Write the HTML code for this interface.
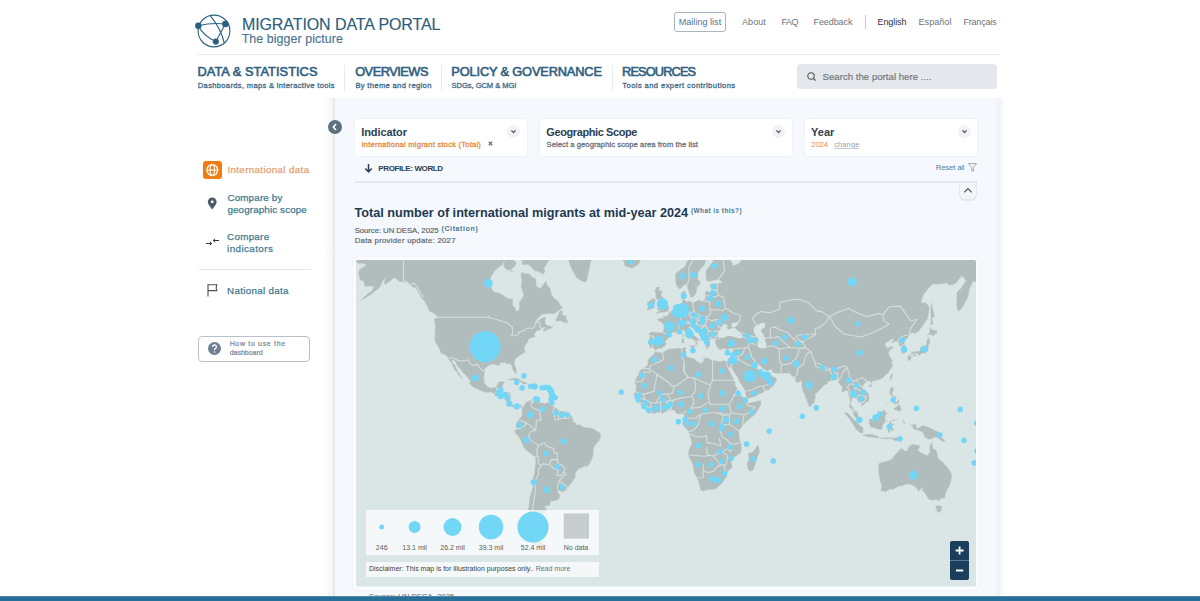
<!DOCTYPE html>
<html><head><meta charset="utf-8">
<style>
*{margin:0;padding:0;box-sizing:border-box}
html,body{width:1200px;height:601px;overflow:hidden;background:#fff;font-family:"Liberation Sans",sans-serif}
.a{position:absolute;white-space:nowrap}
.vd{position:absolute;top:65px;width:1px;height:26px;background:#e9ecef}
.card{position:absolute;background:#fff;border-radius:3px;box-shadow:0 0 2px rgba(40,60,80,0.10)}
.chev{position:absolute;width:13px;height:13px;border-radius:50%;background:#f0f2f5}
.lg{top:544px;text-align:center;font-size:7px;line-height:8px;color:#555d63}
</style></head><body>
<!-- logo -->
<svg class="a" style="left:190px;top:8px" width="45" height="45" viewBox="190 8 45 45">
 <g fill="none" stroke="#2a5f80" stroke-width="1.1">
  <circle cx="214" cy="31" r="15.9"/>
  <path d="M198.3 25.7 Q212 22.3 225.4 24"/>
  <path d="M210.5 15.9 Q221 29 224.3 43"/>
  <path d="M225.4 24 L215.8 41.6"/>
  <path d="M198.3 25.7 Q203.5 36 215.8 41.6"/>
 </g>
 <g fill="#2a5f80"><circle cx="198.3" cy="25.7" r="3.2"/><circle cx="225.4" cy="24" r="3.3"/><circle cx="215.8" cy="41.6" r="3.1"/></g>
</svg>

<!-- top nav -->
<div class="a" style="left:674px;top:11.5px;width:52px;height:20px;border:1px solid #a9b6bf;border-radius:3px"></div>
<div class="a" style="left:865px;top:15px;width:1px;height:14px;background:#c5c9cc"></div>
<div class="a" style="left:197px;top:54px;width:803px;height:1px;background:#eaedf0"></div>
<div class="vd" style="left:344px"></div>
<div class="vd" style="left:441px"></div>
<div class="vd" style="left:612px"></div>
<div class="a" style="left:797px;top:64px;width:200px;height:25px;background:#e4e7eb;border-radius:4px"></div>
<svg class="a" style="left:806px;top:71px" width="11" height="11"><circle cx="5" cy="5" r="3.2" fill="none" stroke="#555" stroke-width="1.1"/><path d="M7.3 7.3 L9.5 9.5" stroke="#555" stroke-width="1.2"/></svg>

<!-- panel -->
<div class="a" style="left:324px;top:98px;width:12px;height:510px;background:linear-gradient(to right,rgba(255,255,255,0),rgba(225,230,236,0.6))"></div>
<div class="a" style="left:333px;top:98px;width:664px;height:510px;background:#f5f9fd;border-left:2px solid #e6eaef"></div>
<div class="a" style="left:997px;top:98px;width:8px;height:510px;background:linear-gradient(to right,rgba(225,230,236,0.6),rgba(255,255,255,0))"></div>

<!-- collapse button -->
<div class="a" style="left:328px;top:120px;width:14px;height:14px;border-radius:50%;background:#5d7181"></div>
<svg class="a" style="left:328px;top:120px" width="14" height="14"><path d="M8 4 L5.3 7 L8 10" fill="none" stroke="#fff" stroke-width="1.6"/></svg>

<!-- cards -->
<div class="card" style="left:355px;top:118.5px;width:172px;height:37px"></div>
<div class="card" style="left:540px;top:119px;width:252px;height:37px"></div>
<div class="card" style="left:804.5px;top:119px;width:172.5px;height:37px"></div>
<div class="chev" style="left:507px;top:124.5px"></div>
<div class="chev" style="left:772px;top:124.5px"></div>
<div class="chev" style="left:957.5px;top:124.5px"></div>
<svg class="a" style="left:507px;top:124.5px" width="13" height="13"><path d="M4.4 5.4 L6.5 7.6 L8.6 5.4" fill="none" stroke="#50565c" stroke-width="1.3"/></svg>
<svg class="a" style="left:772px;top:124.5px" width="13" height="13"><path d="M4.4 5.4 L6.5 7.6 L8.6 5.4" fill="none" stroke="#50565c" stroke-width="1.3"/></svg>
<svg class="a" style="left:957.5px;top:124.5px" width="13" height="13"><path d="M4.4 5.4 L6.5 7.6 L8.6 5.4" fill="none" stroke="#50565c" stroke-width="1.3"/></svg>
<svg class="a" style="left:487px;top:140px" width="8" height="8"><path d="M1.8 1.8 L5.2 5.2 M5.2 1.8 L1.8 5.2" stroke="#707478" stroke-width="1.3"/></svg>

<!-- profile row -->
<svg class="a" style="left:364px;top:163px" width="10" height="11"><path d="M4.5 1 V8.5 M1.3 5.5 L4.5 8.8 L7.7 5.5" fill="none" stroke="#2c4052" stroke-width="1.5"/></svg>
<svg class="a" style="left:967px;top:162px" width="11" height="11"><path d="M1.5 1.5 H9.5 L6.3 5.5 V9.5 L4.7 8.5 V5.5 Z" fill="none" stroke="#98a1a7" stroke-width="0.9"/></svg>
<div class="a" style="left:959px;top:181px;width:17.5px;height:18.5px;border-radius:0 0 6px 6px;background:#f3f6f9;border:1px solid #e4e8ec;border-top:none;box-shadow:0 1px 1px rgba(0,0,0,0.06)"></div>
<div class="a" style="left:355px;top:181px;width:622px;height:1.5px;background:#e5e9ed"></div>
<svg class="a" style="left:959px;top:181px" width="18" height="18"><path d="M5.3 11.3 L9 7.6 L12.7 11.3" fill="none" stroke="#4a4f55" stroke-width="1.1"/></svg>

<!-- sidebar -->
<div class="a" style="left:203.4px;top:160.6px;width:18.5px;height:18.2px;background:#f07c14;border-radius:3px"></div>
<svg class="a" style="left:203.4px;top:160.6px" width="19" height="19"><g fill="none" stroke="#fff" stroke-width="1.1"><circle cx="9.3" cy="9.1" r="5.4" stroke-width="1.3"/><ellipse cx="9.3" cy="9.1" rx="2.2" ry="5.3"/><path d="M4 9.1H14.6"/></g></svg>
<svg class="a" style="left:207px;top:197px" width="11" height="13"><path d="M5.2 12.5 C2 8.5 0.8 6.8 0.8 4.8 A4.4 4.4 0 0 1 9.6 4.8 C9.6 6.8 8.4 8.5 5.2 12.5Z" fill="#4c5b6a"/><circle cx="5.2" cy="4.8" r="1.4" fill="#fff"/></svg>
<svg class="a" style="left:205px;top:237px" width="15" height="10"><g fill="none" stroke="#333" stroke-width="1"><path d="M1 6.5 H6.5 M4.8 4.8 L6.8 6.5 L4.8 8.2"/><path d="M14 3.5 H8.5 M10.2 1.8 L8.2 3.5 L10.2 5.2"/></g></svg>
<div class="a" style="left:199px;top:269px;width:112px;height:1px;background:#e3e6e9"></div>
<svg class="a" style="left:206px;top:283px" width="13" height="14"><path d="M2 13.5 V1.8 H10.8 Q9.6 4.6 10.8 7.6 H2" fill="none" stroke="#4a4f55" stroke-width="1.1"/></svg>
<div class="a" style="left:198px;top:335.6px;width:112px;height:26px;border:1px solid #b9c1c8;border-radius:4px"></div>
<div class="a" style="left:207.5px;top:342px;width:13px;height:13px;border-radius:50%;background:#6f7f92"></div>
<svg class="a" style="left:207.5px;top:342px" width="13" height="13"><path d="M4.6 5 A1.9 1.9 0 1 1 7.3 6.6 C6.6 7 6.5 7.4 6.5 8" fill="none" stroke="#fff" stroke-width="1.3"/><circle cx="6.5" cy="10" r="0.8" fill="#fff"/></svg>

<!-- map -->
<div class="a" style="left:353px;top:257px;width:626px;height:332.5px;border-radius:5px;background:#f9fbfd;box-shadow:0 0 1px rgba(180,190,200,0.5)"></div>
<svg class="a" style="left:356px;top:260px" width="620" height="327" viewBox="356 260 620 327">
 <defs><clipPath id="mc"><rect x="356" y="260" width="620" height="326.5" rx="2"/></clipPath></defs>
 <g clip-path="url(#mc)">
  <rect x="356" y="260" width="620" height="327" fill="#dae5e5"/>
  <g fill="#b1bdbc" stroke="#d5dfdf" stroke-width="0.5" stroke-linejoin="round"><path d="M353.2 258.9 L353.2 247.6 L364.4 237.2 L375.5 229.8 L403.5 239.3 L427.7 237.2 L451.9 247.6 L489.1 247.6 L498.4 242.5 L505.9 250.0 L509.6 254.8 L502.1 265.1 L497.1 268.8 L494.7 270.9 L491.0 277.6 L490.6 286.2 L493.8 291.8 L498.4 292.5 L502.1 294.2 L507.7 298.2 L512.8 298.8 L512.9 305.5 L515.2 307.6 L515.9 310.7 L518.9 310.1 L519.3 305.5 L518.9 302.4 L522.6 297.5 L523.4 294.2 L521.7 289.0 L520.8 287.3 L521.7 281.8 L520.8 276.1 L521.0 272.5 L526.4 273.3 L530.1 274.1 L531.9 276.9 L535.7 278.0 L536.6 285.5 L536.6 286.2 L540.3 288.3 L544.0 283.6 L545.9 280.7 L547.8 285.5 L550.6 289.0 L551.5 294.2 L554.3 298.2 L558.0 300.8 L559.9 303.9 L562.3 307.6 L559.9 310.1 L554.3 313.9 L546.8 313.9 L542.2 314.5 L537.5 318.8 L534.7 322.9 L539.4 319.3 L545.0 316.8 L546.3 317.9 L545.0 320.2 L545.5 323.5 L546.8 325.1 L550.6 326.1 L552.4 326.9 L554.3 325.6 L552.4 328.0 L546.8 330.1 L543.5 331.9 L543.1 329.1 L545.9 327.5 L541.2 328.3 L541.2 329.6 L537.5 330.9 L535.7 331.9 L534.4 334.7 L535.7 336.7 L532.9 337.5 L531.0 338.2 L528.2 339.4 L528.2 342.1 L526.4 343.8 L525.4 345.2 L524.5 348.0 L525.4 352.2 L522.6 353.8 L519.8 355.4 L518.0 357.1 L515.2 359.4 L514.4 363.1 L516.1 368.0 L516.9 372.5 L515.2 374.0 L513.7 371.1 L512.0 368.4 L511.5 365.8 L509.6 363.7 L507.7 364.3 L504.9 362.8 L502.1 362.8 L499.9 363.3 L499.9 365.8 L496.6 365.2 L492.8 364.3 L489.7 365.0 L487.2 366.7 L484.8 369.0 L485.0 372.3 L484.1 376.2 L484.1 379.3 L485.0 383.3 L487.2 386.1 L490.0 387.8 L494.7 387.0 L495.6 387.2 L497.1 385.3 L497.9 382.3 L500.3 381.5 L504.0 381.3 L504.4 381.9 L503.1 385.3 L502.5 387.6 L501.8 389.2 L501.6 392.1 L502.1 392.5 L505.9 392.3 L509.6 392.3 L511.1 394.0 L510.5 397.9 L510.5 399.8 L510.0 401.7 L511.5 403.6 L513.3 405.5 L515.2 405.8 L517.4 404.7 L520.8 405.1 L521.9 406.0 L521.7 408.3 L520.4 408.1 L519.8 406.6 L518.0 405.8 L516.3 407.0 L516.1 408.7 L514.2 407.7 L512.4 407.0 L510.2 406.2 L506.4 403.6 L506.2 401.3 L503.1 398.1 L500.3 397.3 L497.5 396.4 L495.6 396.0 L492.8 393.5 L491.0 392.1 L488.2 392.7 L485.4 392.5 L480.0 390.6 L477.0 389.0 L473.3 387.6 L471.4 385.7 L469.2 383.5 L469.9 380.9 L467.9 377.9 L464.9 374.6 L463.0 373.0 L461.6 370.7 L459.5 368.2 L457.1 365.8 L456.0 363.3 L454.7 360.9 L452.4 360.2 L452.6 362.6 L453.7 363.7 L455.6 365.8 L456.5 368.0 L457.5 370.5 L459.3 373.2 L460.1 375.2 L460.6 375.8 L462.3 377.9 L461.4 378.5 L460.1 377.1 L457.5 374.6 L457.1 372.1 L454.7 370.5 L453.5 368.6 L451.9 364.1 L449.1 360.4 L448.0 358.3 L446.3 355.8 L445.4 354.9 L441.4 353.8 L439.8 350.4 L437.9 346.2 L435.7 343.3 L434.4 339.9 L434.9 333.4 L435.1 325.1 L433.8 319.0 L437.0 317.6 L437.0 315.9 L433.2 313.0 L428.6 311.0 L427.7 307.0 L423.9 300.8 L421.1 297.5 L418.4 292.5 L415.6 288.0 L412.8 287.3 L410.9 285.5 L406.3 282.5 L399.7 281.8 L394.1 278.0 L390.4 281.1 L386.7 283.6 L383.9 284.7 L384.8 279.2 L386.7 277.2 L383.0 280.7 L381.1 285.5 L378.3 289.0 L375.5 290.8 L371.8 294.2 L368.1 296.5 L364.4 298.8 L359.7 300.8 L364.4 296.5 L369.9 291.8 L371.8 290.8 L373.7 286.5 L369.9 286.2 L364.4 286.9 L363.8 281.8 L359.7 279.9 L358.2 272.1 L359.7 269.3 L366.2 265.1 L362.5 263.3 L358.8 263.8 L356.0 262.0 L353.2 258.9Z"/><path d="M550.9 254.3 L548.7 260.7 L546.3 265.1 L544.4 268.0 L545.3 271.7 L543.1 274.5 L538.5 271.7 L534.7 270.9 L532.9 269.3 L528.2 264.6 L523.6 265.1 L521.7 264.2 L522.6 259.4 L530.1 254.8 L531.9 247.6 L517.0 225.7 L554.3 225.7Z"/><path d="M504.2 267.6 L506.8 270.1 L510.5 270.5 L514.8 266.3 L516.7 263.3 L513.3 259.4 L507.7 257.1 L504.4 260.7 L503.4 264.6Z"/><path d="M511.1 272.5 L513.7 271.3 L512.4 270.5 L510.2 270.5Z"/><path d="M585.6 282.5 L587.2 279.9 L587.8 276.1 L589.3 270.1 L591.0 261.6 L593.4 254.8 L604.6 237.2 L563.6 237.2 L566.4 254.8 L568.2 259.4 L570.1 265.9 L572.0 270.1 L574.8 274.9 L576.6 278.0 L581.3 281.1Z"/><path d="M621.3 259.4 L624.1 262.0 L624.3 265.9 L628.8 267.6 L632.5 268.4 L638.1 265.1 L640.7 261.1 L638.4 255.7 L632.5 256.2 L625.0 254.8 L622.2 256.6Z"/><path d="M567.3 324.0 L568.1 321.3 L566.4 318.8 L566.4 315.9 L562.7 314.8 L562.3 309.8 L560.2 310.7 L558.9 312.4 L557.1 316.8 L556.1 318.8 L555.6 321.3 L561.7 321.3 L563.6 323.2 L565.5 322.1Z"/><path d="M507.7 380.5 L509.6 378.9 L513.3 377.9 L517.0 378.1 L521.7 380.7 L525.4 382.3 L527.8 383.9 L521.7 384.5 L522.3 382.9 L519.8 381.3 L517.0 380.7 L513.3 380.1 L509.6 380.5Z"/><path d="M527.5 387.4 L530.1 384.7 L535.7 384.9 L538.6 387.0 L533.8 388.2 L531.0 387.8 L527.5 388.0Z"/><path d="M520.2 387.6 L524.1 388.0 L523.0 388.6 L520.8 388.2Z"/><path d="M540.9 387.4 L543.9 387.6 L543.1 388.2 L540.9 388.2Z"/><path d="M521.9 406.0 L523.6 406.4 L525.4 402.8 L528.2 401.1 L531.0 400.2 L532.9 399.0 L533.6 400.7 L532.7 401.9 L532.7 403.6 L533.8 401.7 L535.3 400.6 L535.7 399.4 L537.5 400.7 L539.4 402.6 L541.2 402.4 L545.0 403.4 L546.8 402.3 L550.7 402.3 L549.6 403.2 L552.4 404.5 L552.8 406.4 L555.2 407.4 L558.0 409.6 L559.9 411.1 L563.6 411.3 L566.4 411.9 L569.2 413.2 L571.0 414.8 L572.9 418.9 L572.9 421.4 L574.8 422.3 L576.6 424.2 L575.7 424.7 L579.4 424.2 L583.1 426.8 L587.8 427.5 L589.7 427.7 L593.4 428.6 L594.3 429.2 L597.1 431.1 L600.5 433.1 L601.0 437.2 L599.9 440.1 L597.1 442.9 L594.3 446.7 L593.4 450.6 L593.4 455.4 L592.1 458.3 L590.6 462.3 L587.8 466.3 L585.6 466.3 L582.2 467.5 L579.8 468.4 L576.6 471.4 L575.7 473.5 L575.5 477.3 L572.5 482.0 L570.1 484.2 L568.2 487.5 L566.4 489.7 L563.8 491.7 L561.4 491.7 L558.4 490.6 L557.3 491.0 L559.3 494.2 L560.4 495.9 L558.7 499.4 L554.3 501.0 L550.6 501.3 L550.0 505.6 L545.9 505.9 L545.0 506.6 L546.8 509.4 L545.9 511.2 L544.6 515.0 L541.6 516.3 L540.3 519.0 L542.2 522.2 L543.5 523.9 L540.3 528.7 L538.5 530.7 L537.5 534.5 L538.6 537.3 L542.2 543.8 L544.6 544.5 L540.7 548.4 L535.7 546.1 L531.9 542.2 L527.3 536.0 L525.8 530.1 L525.4 524.4 L527.3 520.3 L528.2 513.7 L530.1 511.2 L527.7 509.9 L528.6 506.1 L529.1 503.7 L529.3 498.9 L529.7 496.6 L531.0 493.1 L531.9 489.7 L532.7 487.5 L532.9 480.9 L533.2 476.6 L534.5 472.5 L534.7 467.7 L535.5 462.3 L535.1 457.4 L532.9 455.4 L531.9 454.4 L528.2 452.1 L525.4 449.6 L523.9 447.7 L522.4 444.8 L520.8 441.0 L518.9 437.2 L517.0 435.0 L514.8 432.6 L514.6 431.1 L516.3 428.8 L517.0 427.9 L515.4 426.4 L516.1 424.2 L517.0 421.4 L518.0 420.4 L519.3 418.9 L521.7 415.8 L521.7 414.8 L521.9 410.2 L521.0 408.3 L521.9 406.0Z"/><path d="M655.6 350.4 L654.3 349.2 L652.2 347.6 L649.4 348.0 L649.6 345.0 L648.3 344.0 L649.6 339.7 L649.4 336.0 L648.7 333.4 L651.1 331.7 L654.8 331.9 L658.9 332.4 L662.6 332.4 L663.8 328.3 L663.8 325.1 L661.9 322.6 L658.2 320.7 L657.1 319.3 L660.4 317.9 L663.0 318.2 L663.0 315.3 L666.0 316.2 L668.8 313.9 L669.5 311.5 L672.1 310.4 L674.4 307.0 L675.3 304.6 L679.0 303.9 L682.0 302.7 L682.0 299.5 L681.5 297.5 L681.3 292.5 L685.6 290.1 L685.6 294.2 L684.6 299.2 L686.5 301.7 L689.3 300.8 L693.0 302.7 L696.7 300.8 L699.5 299.8 L700.8 301.1 L702.3 300.8 L705.5 298.5 L705.3 296.9 L705.1 292.5 L707.0 290.4 L709.2 292.5 L711.2 291.8 L711.1 288.0 L709.8 286.2 L709.8 284.7 L712.0 283.6 L718.1 283.6 L722.2 282.2 L719.1 279.9 L716.3 279.9 L712.5 281.1 L707.9 281.8 L706.0 279.9 L706.0 276.1 L705.5 272.1 L706.0 270.1 L708.8 266.8 L712.5 261.6 L713.3 261.6 L710.7 258.0 L707.5 258.0 L706.0 260.3 L704.2 265.9 L701.4 268.0 L698.6 272.1 L698.0 276.9 L698.0 279.2 L700.4 281.8 L700.4 284.4 L697.7 286.5 L696.7 290.8 L695.8 294.2 L692.6 297.5 L690.2 297.5 L689.8 294.9 L689.3 294.2 L688.0 290.1 L686.9 285.5 L685.7 283.6 L685.0 285.5 L683.7 285.5 L680.9 288.7 L679.0 289.0 L676.4 285.8 L675.9 283.6 L675.3 280.3 L675.3 274.1 L677.2 272.1 L680.9 269.3 L684.6 266.8 L686.5 262.5 L689.3 258.0 L690.2 257.1 L692.1 250.0 L693.9 245.0 L703.2 237.2 L714.4 231.6 L723.7 237.2 L740.5 252.4 L747.9 245.0 L764.7 245.0 L777.7 242.5 L796.3 219.5 L815.0 219.5 L861.5 190.6 L889.4 219.5 L926.7 225.7 L963.9 239.8 L982.5 237.2 L1010.5 245.0 L1010.5 261.6 L999.3 261.6 L995.6 272.1 L990.0 274.9 L982.5 281.8 L973.2 281.8 L969.5 289.0 L968.6 295.9 L963.9 305.5 L961.1 309.2 L957.8 311.8 L956.5 305.5 L956.5 292.5 L960.2 289.0 L965.8 280.7 L962.1 276.1 L954.6 284.4 L949.0 285.5 L946.8 283.3 L939.7 284.4 L932.3 284.4 L928.0 289.0 L923.0 295.9 L921.1 302.4 L925.7 302.4 L928.5 305.5 L929.5 308.6 L928.5 314.5 L927.6 318.8 L923.0 325.6 L919.2 330.9 L915.5 333.4 L911.8 332.9 L909.4 334.7 L907.5 338.5 L904.3 340.9 L903.4 342.1 L905.3 344.3 L906.9 350.4 L906.2 352.4 L903.4 353.6 L901.5 354.0 L901.2 349.2 L901.5 346.4 L899.1 346.2 L899.1 344.3 L898.4 341.9 L895.0 341.6 L892.2 343.8 L891.7 342.1 L893.5 339.7 L892.2 339.0 L889.4 340.9 L885.7 343.3 L885.2 345.7 L887.6 348.0 L890.7 346.2 L894.1 347.3 L890.4 350.1 L889.4 351.5 L888.5 353.8 L890.0 356.5 L890.9 358.3 L893.0 361.5 L891.3 363.1 L893.2 364.8 L892.2 367.3 L889.4 371.1 L888.5 373.2 L885.7 375.2 L882.0 378.7 L878.3 379.9 L875.5 380.7 L872.7 381.3 L871.2 383.7 L870.3 381.3 L868.0 381.1 L865.2 382.7 L863.4 385.3 L862.8 387.2 L864.3 389.6 L865.2 391.1 L867.5 392.1 L868.8 394.0 L869.3 397.9 L869.0 400.7 L867.1 402.1 L865.2 402.8 L864.3 404.5 L861.9 406.2 L861.1 405.1 L861.5 403.2 L860.2 402.6 L858.7 402.4 L856.9 399.4 L855.9 398.8 L853.9 397.1 L853.1 396.9 L852.2 398.8 L850.9 402.6 L850.7 405.1 L852.8 406.8 L853.1 409.2 L854.4 409.6 L856.5 411.1 L858.5 414.8 L858.5 417.1 L860.0 419.7 L858.7 419.9 L855.9 418.0 L854.6 417.1 L853.1 413.9 L852.8 412.0 L852.4 410.2 L850.3 407.7 L849.0 406.8 L849.6 403.6 L849.4 399.8 L848.1 395.0 L848.1 391.1 L845.1 390.6 L842.9 392.5 L841.6 391.7 L842.0 386.3 L840.1 385.3 L838.2 382.3 L836.9 379.7 L834.5 380.3 L831.7 380.7 L829.9 381.1 L827.6 382.3 L827.1 384.3 L824.3 385.3 L822.4 387.6 L819.2 390.8 L816.8 393.1 L815.3 394.0 L815.5 397.9 L814.6 400.7 L814.6 403.0 L813.7 403.0 L811.6 405.7 L810.3 407.2 L808.4 405.7 L808.1 404.5 L806.8 400.7 L805.6 398.3 L804.7 395.0 L803.4 393.1 L802.5 390.2 L801.6 386.3 L801.7 383.3 L801.4 382.3 L801.0 380.3 L800.1 381.7 L797.8 382.9 L796.0 381.7 L794.5 379.5 L796.3 378.5 L793.5 377.3 L791.7 376.4 L790.8 374.6 L789.8 373.4 L785.2 373.6 L780.9 373.8 L775.9 373.4 L774.0 373.0 L772.7 372.3 L771.8 370.1 L770.8 369.6 L768.4 370.7 L766.5 370.9 L764.7 370.1 L761.9 368.2 L760.6 366.0 L759.7 365.4 L758.2 363.9 L756.3 363.7 L755.4 364.8 L756.1 366.9 L757.8 369.2 L759.5 371.1 L760.0 373.2 L760.6 374.8 L761.5 375.2 L762.1 373.2 L761.9 371.9 L761.3 375.6 L762.8 376.2 L765.6 376.0 L767.5 375.6 L769.3 373.6 L770.5 372.1 L771.0 371.5 L770.8 374.6 L771.8 375.6 L773.1 376.7 L775.1 377.1 L776.4 378.7 L777.3 379.3 L775.5 382.3 L774.9 383.5 L773.6 385.3 L773.4 386.5 L771.4 387.2 L770.3 388.4 L768.4 390.2 L765.6 390.8 L762.8 392.9 L759.1 394.0 L756.3 396.0 L753.5 396.9 L749.8 398.3 L747.0 398.5 L746.4 397.1 L745.3 394.0 L745.1 391.1 L744.2 389.2 L742.3 386.3 L740.5 383.3 L739.0 381.3 L737.7 377.3 L735.8 375.2 L734.0 372.1 L732.7 370.1 L731.5 368.0 L731.0 364.8 L730.4 367.3 L729.9 368.4 L728.6 367.3 L726.7 363.9 L726.5 363.7 L726.1 361.1 L729.9 360.7 L730.8 359.1 L731.2 357.1 L732.1 354.9 L732.7 351.5 L733.0 348.7 L732.1 349.0 L730.2 348.5 L727.4 349.9 L725.6 349.2 L723.2 348.5 L720.9 349.9 L718.1 348.7 L716.8 346.9 L715.9 344.5 L715.3 342.1 L714.8 340.9 L715.3 339.7 L717.2 338.7 L720.0 338.5 L714.8 339.0 L713.5 339.0 L710.7 339.0 L708.8 339.7 L710.3 340.9 L708.5 342.1 L708.8 343.8 L710.7 345.0 L709.8 345.7 L708.5 346.9 L707.9 349.4 L706.4 348.5 L706.0 346.6 L705.7 345.0 L704.7 343.3 L703.6 342.1 L702.1 339.7 L702.3 336.5 L700.4 335.0 L698.6 333.4 L695.8 332.2 L693.9 329.6 L693.0 327.7 L691.5 326.7 L688.9 327.2 L689.1 330.4 L691.1 331.9 L692.4 334.7 L695.8 336.2 L696.2 336.2 L698.0 338.7 L699.5 339.4 L700.3 341.4 L698.0 340.2 L696.7 341.9 L697.8 343.3 L696.7 344.8 L695.8 345.7 L695.0 345.7 L695.8 342.6 L695.0 340.9 L693.7 340.2 L692.4 339.0 L690.2 337.7 L688.7 336.5 L686.5 334.7 L685.6 333.4 L685.2 332.2 L683.7 330.4 L682.6 329.8 L680.0 331.4 L679.6 331.7 L677.2 333.2 L676.1 332.7 L673.4 332.2 L671.6 332.9 L672.0 336.2 L670.1 337.5 L667.7 338.5 L666.0 340.9 L665.4 342.1 L666.4 344.0 L664.7 346.6 L663.0 347.3 L661.5 348.5 L657.8 348.7 L655.6 350.4Z"/><path d="M655.0 350.8 L656.7 352.0 L662.3 352.4 L664.9 351.1 L667.9 349.2 L671.6 348.5 L678.1 348.0 L681.8 348.3 L684.2 347.3 L686.7 347.8 L685.6 349.4 L685.7 350.8 L686.5 352.0 L685.9 353.3 L684.8 355.1 L687.4 356.9 L690.6 357.4 L694.5 358.7 L696.7 360.9 L700.4 363.1 L703.1 361.8 L703.2 359.1 L706.0 357.4 L709.8 358.7 L710.7 359.4 L712.9 360.2 L716.3 360.7 L719.1 361.5 L721.7 361.1 L723.7 360.2 L726.1 360.9 L726.5 363.7 L726.7 363.9 L727.4 366.9 L728.9 369.6 L730.2 372.1 L732.1 376.2 L734.5 380.3 L735.3 382.3 L735.3 385.1 L737.7 388.2 L738.6 391.1 L739.5 392.9 L741.4 394.4 L743.3 396.2 L745.5 397.9 L746.6 400.6 L747.9 402.6 L749.8 402.8 L752.6 402.1 L755.4 401.3 L759.1 400.7 L761.5 400.2 L761.1 402.6 L761.5 402.8 L760.6 405.5 L759.1 408.3 L757.2 411.1 L755.4 413.9 L752.6 416.7 L750.3 418.6 L747.9 420.4 L745.1 423.0 L743.3 425.1 L742.2 426.6 L739.9 429.8 L739.0 431.6 L739.2 435.0 L739.5 438.2 L740.5 441.0 L741.4 442.0 L741.6 445.8 L741.6 449.6 L740.9 452.5 L739.5 454.0 L735.8 456.4 L732.7 458.1 L731.0 459.9 L731.5 462.3 L732.1 464.7 L732.1 468.4 L729.3 470.0 L727.3 472.3 L727.1 474.5 L726.5 477.7 L724.7 479.4 L723.7 480.7 L721.9 483.5 L718.1 487.0 L716.3 488.6 L713.9 489.7 L710.7 489.7 L707.0 490.1 L703.2 491.5 L701.0 490.4 L700.3 490.1 L699.9 487.5 L699.1 484.2 L698.2 480.9 L696.7 477.9 L694.9 474.5 L693.9 472.5 L693.0 466.3 L692.1 463.3 L690.2 459.3 L688.3 456.4 L688.0 453.5 L688.9 449.6 L691.1 444.8 L691.7 442.5 L690.6 438.8 L689.5 435.4 L688.7 433.5 L688.0 430.7 L686.5 429.4 L684.6 427.5 L682.8 424.2 L682.2 423.6 L683.3 421.4 L684.2 417.6 L684.1 415.8 L683.7 414.8 L682.6 413.9 L680.9 414.1 L679.0 414.1 L677.2 414.3 L675.3 412.0 L674.4 410.5 L672.3 410.4 L669.7 410.5 L667.9 411.1 L665.6 412.0 L664.1 412.8 L662.3 413.4 L660.4 412.8 L658.6 412.4 L655.8 413.0 L652.0 414.1 L649.2 413.0 L646.4 410.2 L644.6 409.2 L642.7 407.7 L641.4 406.4 L640.9 404.5 L639.0 403.2 L638.1 402.1 L636.2 400.7 L634.9 399.4 L634.7 396.9 L633.4 394.6 L634.7 393.1 L635.3 391.1 L635.8 388.2 L636.2 385.3 L635.3 384.3 L634.3 382.3 L635.6 379.3 L636.6 376.7 L638.3 374.8 L639.0 371.9 L641.2 369.0 L643.7 368.0 L645.5 366.9 L647.2 365.2 L647.8 362.8 L647.8 360.4 L648.9 358.3 L650.2 356.5 L651.8 355.8 L653.3 354.9 L654.3 352.7 L655.0 350.8Z"/><path d="M757.8 444.8 L759.1 447.7 L759.8 451.1 L759.5 452.5 L758.2 455.4 L757.6 457.4 L756.3 461.3 L755.2 465.3 L753.7 470.2 L750.2 471.4 L747.9 469.4 L747.4 467.3 L746.6 464.3 L747.6 462.3 L748.7 459.3 L747.9 455.4 L748.7 452.9 L752.2 451.9 L753.5 450.6 L755.4 448.2 L756.9 445.8Z"/><path d="M814.6 407.4 L815.3 404.0 L816.8 405.8 L818.5 408.3 L817.2 410.7 L815.0 411.1Z"/><path d="M655.4 314.5 L660.4 312.7 L664.1 312.4 L668.4 311.3 L669.2 306.4 L666.6 303.9 L665.8 300.8 L663.0 297.2 L661.3 295.2 L662.1 292.2 L662.6 290.4 L658.6 290.4 L660.4 286.9 L656.7 286.9 L654.5 290.8 L655.6 294.2 L655.6 297.9 L656.9 299.8 L659.7 299.5 L659.7 302.4 L660.4 304.6 L657.4 304.6 L658.2 307.6 L656.1 309.2 L660.0 310.4 L658.2 311.0 L655.4 314.5Z"/><path d="M654.8 308.0 L654.6 304.3 L655.8 300.8 L654.5 298.5 L652.2 298.2 L650.2 300.5 L647.4 301.7 L647.0 304.3 L648.3 307.0 L646.4 309.2 L648.3 310.1 L651.1 309.2 L654.3 308.0Z"/><path d="M689.1 345.5 L695.0 345.0 L694.1 348.7 L689.3 346.6Z"/><path d="M681.6 343.3 L684.2 343.1 L684.2 338.5 L681.3 338.5Z"/><path d="M682.0 337.5 L683.7 337.2 L683.7 333.7 L682.0 335.0Z"/><path d="M709.8 352.0 L715.0 352.2 L710.7 352.7Z"/><path d="M726.1 353.3 L730.4 351.1 L727.4 352.0Z"/><path d="M909.7 354.9 L912.7 351.7 L916.4 351.3 L919.2 351.1 L920.7 347.3 L923.9 346.9 L926.3 344.5 L926.7 339.7 L929.3 337.5 L930.4 342.1 L928.5 345.0 L928.4 348.3 L928.2 351.1 L926.3 352.7 L923.9 353.6 L921.1 353.6 L920.7 354.2 L918.9 356.0 L917.4 353.6 L912.7 354.5Z"/><path d="M907.7 356.3 L909.9 355.1 L911.8 357.1 L910.1 360.7 L908.4 361.1 L907.5 357.8Z"/><path d="M912.5 357.1 L916.8 355.4 L915.5 354.0 L913.3 354.9Z"/><path d="M926.7 337.2 L928.9 336.5 L927.6 334.0 L929.3 332.4 L929.8 327.2 L933.2 330.1 L936.9 330.1 L937.5 332.4 L933.2 336.0 L929.7 334.5 L927.8 335.2Z"/><path d="M930.4 325.6 L933.2 324.3 L932.3 317.3 L934.9 317.3 L932.3 305.5 L931.3 301.4 L930.4 310.1 L930.8 320.2Z"/><path d="M889.6 378.3 L891.3 373.6 L893.2 374.2 L890.9 380.5Z"/><path d="M868.2 385.9 L871.4 384.1 L872.7 385.1 L869.9 387.8Z"/><path d="M889.4 392.1 L890.6 387.2 L893.5 387.2 L893.9 390.2 L892.4 393.1 L893.2 396.0 L896.9 396.4 L896.0 398.3 L893.2 396.7 L890.6 395.6 L889.4 394.0Z"/><path d="M893.2 409.2 L896.3 406.4 L899.3 404.0 L901.5 408.7 L899.7 411.9 L896.9 410.4 L893.2 409.4Z"/><path d="M893.2 400.2 L896.0 402.6 L899.7 398.8 L898.8 403.6 L896.9 404.0 L894.1 404.5 L893.2 402.6Z"/><path d="M884.2 406.6 L888.5 402.1 L888.7 401.1 L884.8 405.8Z"/><path d="M869.0 419.5 L870.1 418.6 L872.7 419.5 L876.4 416.3 L881.1 413.0 L883.9 409.2 L885.7 412.0 L888.0 413.0 L885.7 414.5 L885.2 420.4 L887.6 420.8 L884.8 422.3 L882.9 425.1 L882.0 429.4 L879.2 429.8 L873.6 427.9 L871.0 427.5 L869.0 423.8Z"/><path d="M843.4 411.9 L847.5 412.6 L852.8 418.2 L859.1 424.2 L863.4 427.9 L863.2 433.1 L860.6 433.3 L855.9 429.8 L853.1 424.7 L849.4 419.1Z"/><path d="M861.9 435.0 L867.1 434.1 L872.7 434.2 L875.8 435.2 L879.4 436.9 L879.0 438.6 L872.7 437.6 L867.1 436.9 L862.3 435.2Z"/><path d="M880.1 437.6 L887.6 437.6 L895.0 437.8 L898.8 437.6 L902.5 437.6 L898.8 440.1 L896.0 441.6 L891.3 439.1 L885.7 439.1 L881.1 438.9Z"/><path d="M888.3 432.6 L887.6 428.8 L889.1 422.3 L890.9 419.9 L897.8 419.3 L899.1 419.3 L895.0 420.6 L890.6 421.4 L892.2 424.0 L895.6 424.2 L891.9 425.8 L894.1 430.7 L891.3 430.9 L890.2 427.3 L890.4 432.7Z"/><path d="M903.4 418.9 L905.3 423.2 L904.3 424.2 L903.0 421.4Z"/><path d="M909.9 424.7 L915.5 424.0 L917.4 428.4 L923.0 425.3 L928.5 427.1 L937.5 431.2 L940.6 433.9 L941.6 437.2 L946.2 442.0 L941.6 441.4 L938.8 438.4 L934.1 436.9 L932.3 439.1 L928.5 439.5 L924.8 437.4 L922.6 432.2 L917.4 430.3 L914.6 429.4 L911.8 427.7 L913.3 426.8Z"/><path d="M877.3 464.3 L878.3 464.3 L878.3 472.5 L879.4 478.3 L880.1 482.0 L881.6 485.2 L881.1 488.6 L880.1 490.6 L885.7 491.9 L889.4 489.7 L893.2 489.5 L896.9 487.5 L898.8 486.6 L902.5 485.9 L906.2 484.6 L909.9 484.2 L911.8 485.2 L915.5 487.0 L918.5 491.7 L920.2 489.7 L922.6 487.5 L922.0 490.8 L923.9 491.9 L925.7 494.2 L927.6 498.4 L929.5 499.6 L933.2 500.8 L936.0 499.6 L938.6 501.5 L940.6 498.9 L945.3 497.7 L945.7 493.5 L947.5 489.5 L950.0 485.2 L952.0 477.1 L951.1 472.5 L950.0 470.4 L946.8 466.3 L944.4 464.3 L943.4 462.3 L938.4 458.3 L937.5 454.2 L936.5 450.6 L935.1 449.2 L933.2 448.6 L932.3 443.9 L931.3 442.3 L929.7 445.8 L929.7 452.5 L926.7 455.8 L924.8 454.0 L921.1 452.5 L918.3 450.2 L919.2 447.7 L920.7 445.4 L917.4 445.0 L912.7 443.9 L910.9 445.2 L909.5 445.6 L908.1 447.7 L907.1 450.4 L904.3 450.6 L902.5 448.6 L900.6 448.6 L898.8 450.6 L896.9 453.1 L895.0 454.4 L893.5 456.4 L891.3 459.3 L888.5 460.3 L886.8 460.9 L882.9 461.7 L879.2 463.3Z"/><path d="M935.2 505.4 L942.1 505.9 L941.9 509.1 L939.7 512.7 L937.5 512.2 L936.5 509.9Z"/><path d="M987.6 490.6 L991.3 496.1 L998.4 498.2 L995.6 502.5 L991.5 506.9 L989.6 501.8 L990.9 496.1Z"/><path d="M987.6 504.9 L990.5 507.9 L988.1 512.4 L984.4 515.0 L980.7 520.6 L976.0 519.0 L978.8 513.7 L984.4 508.6Z"/></g>
  <g fill="#dae5e5"><path d="M720.0 338.0 L718.1 337.0 L717.2 334.7 L718.1 332.9 L719.4 330.1 L721.3 327.7 L723.2 324.3 L725.6 324.3 L728.4 325.6 L726.5 327.2 L728.4 329.6 L731.2 328.8 L734.0 327.5 L735.8 329.1 L736.8 330.1 L739.9 331.9 L743.5 337.0 L739.9 338.5 L733.0 336.7 L731.2 336.0 L727.4 336.0 L724.7 337.7Z"/><path d="M731.2 326.9 L732.1 322.9 L736.8 322.4 L739.2 322.9 L736.8 325.6 L734.9 327.5Z"/><path d="M753.5 329.6 L754.4 333.4 L755.9 336.0 L758.2 339.0 L759.1 339.9 L757.8 342.1 L757.2 343.8 L757.1 344.8 L758.2 346.9 L761.0 348.5 L765.6 348.3 L766.5 347.1 L766.2 342.8 L764.7 340.9 L765.6 338.5 L764.1 336.5 L763.6 334.0 L761.9 332.9 L761.0 329.6 L764.7 327.7 L765.2 323.7 L762.6 322.6 L758.2 324.8 L755.4 326.1 L754.1 327.7Z"/><path d="M729.7 253.4 L730.4 258.9 L731.2 261.6 L733.4 265.5 L737.3 264.2 L740.5 262.0 L742.3 256.2 L744.2 250.0Z"/></g>
  <g fill="none" stroke="#d4dede" stroke-width="1.1" stroke-linejoin="round"><path d="M436.4 317.3 L488.7 317.3 L488.7 316.2 L489.5 317.9 L492.8 318.5 L499.2 320.2 L508.1 323.2 L508.7 324.3 L510.5 325.6 L512.4 327.5 L512.6 333.4 L511.3 335.7 L515.2 335.5 L518.9 334.0 L518.5 332.2 L523.6 330.9 L526.9 328.3 L532.9 328.3 L535.1 325.9 L535.7 323.7 L537.1 321.8 L539.4 322.1 L539.8 326.4 L541.2 328.8"/><path d="M403.5 237.2 L403.5 280.7 L407.2 281.8 L410.0 285.5 L413.7 282.9 L417.4 287.3 L422.1 295.9 L423.9 296.2"/><path d="M448.0 358.3 L452.4 357.8 L459.3 360.9 L464.5 360.9 L467.7 359.8 L471.4 364.6 L474.2 365.8 L477.0 364.1 L480.7 369.0 L485.0 372.3"/><path d="M494.3 395.0 L494.3 393.5 L495.8 391.9 L497.7 391.9 L496.6 388.6 L499.9 388.6 L501.6 387.2"/><path d="M499.9 388.6 L499.9 392.3 L501.8 392.7"/><path d="M499.7 395.2 L502.1 396.2 L503.4 397.9"/><path d="M499.7 395.2 L498.2 396.5"/><path d="M503.4 397.9 L506.4 396.4 L507.7 394.8 L511.1 394.0"/><path d="M506.4 401.5 L510.3 401.9"/><path d="M510.3 404.3 L511.6 407.0"/><path d="M521.9 406.0 L522.3 407.5 L521.0 408.9"/><path d="M533.2 400.2 L531.0 401.7 L531.2 406.6 L535.5 409.2 L540.3 410.7 L539.8 413.9 L540.7 418.9 L541.4 420.1"/><path d="M554.3 406.4 L553.0 412.6 L554.3 413.9 L555.0 419.1 L557.1 419.9 L560.8 418.8 L564.5 418.0 L569.2 418.2 L569.9 414.5"/><path d="M559.5 411.3 L558.0 414.8 L558.6 418.6"/><path d="M565.5 411.7 L564.5 416.7 L565.3 418.4"/><path d="M541.4 420.1 L536.4 420.3 L535.8 430.1 L530.3 432.2 L528.4 436.1 L530.3 439.9 L534.7 442.9 L536.6 443.5 L538.3 446.0 L536.8 451.1 L537.3 455.2 L536.6 456.0 L535.1 457.2"/><path d="M518.9 419.9 L522.6 421.4 L525.8 422.7 L525.4 425.1 L520.0 428.6 L516.5 428.6"/><path d="M535.8 430.1 L534.5 429.6 L529.3 424.7 L525.8 422.7"/><path d="M537.3 455.2 L538.6 459.1 L538.1 463.3 L540.9 465.9 L542.5 463.9 L549.4 464.7 L551.1 459.5 L557.6 459.9 L557.4 453.1 L554.1 452.9 L553.7 448.4 L549.4 447.3 L546.1 445.6 L544.4 442.5 L538.3 446.0"/><path d="M540.9 465.9 L538.5 469.4 L538.6 474.5 L536.4 477.7 L534.7 483.1 L535.7 488.6 L534.9 494.2 L533.6 502.5 L532.3 513.2 L532.9 520.3 L531.4 525.8 L529.1 530.1 L531.9 534.8 L538.6 537.3"/><path d="M549.4 464.7 L553.3 467.9 L558.4 470.8 L556.9 475.2 L561.7 475.4 L564.3 471.6 L564.9 468.4 L562.1 464.9 L558.2 464.5 L557.6 459.9"/><path d="M564.3 471.6 L565.8 474.8 L562.1 477.1 L558.7 481.3 L557.6 486.3 L557.3 489.5"/><path d="M558.7 481.3 L561.7 482.8 L566.9 486.6 L566.6 489.0"/><path d="M662.6 332.4 L667.3 334.0 L672.0 335.0"/><path d="M649.4 336.0 L650.7 335.7 L653.9 336.7 L653.2 338.5 L653.0 341.6 L652.0 341.9 L653.0 345.2 L652.0 347.6"/><path d="M670.7 311.3 L673.8 314.8 L676.8 315.9 L677.9 315.9 L681.3 317.3 L680.2 321.3 L678.1 324.5 L679.0 325.9 L678.3 328.0 L680.0 331.4"/><path d="M672.3 310.4 L675.3 310.1 L676.8 312.1 L677.5 309.2 L679.4 304.9"/><path d="M676.8 312.1 L677.9 315.9"/><path d="M682.0 299.5 L684.6 299.8"/><path d="M692.4 302.7 L693.2 306.7 L693.9 311.5 L688.5 313.6 L691.7 317.9 L690.2 321.5 L685.6 321.5 L683.9 321.5 L680.2 321.3"/><path d="M678.7 325.9 L681.8 324.8 L685.2 324.0 L685.6 323.2 L688.7 322.9 L691.5 324.3 L691.3 326.9"/><path d="M691.7 317.9 L693.9 317.3 L697.5 318.5 L697.8 320.2 L696.0 323.2 L691.5 324.3"/><path d="M693.9 311.5 L696.7 313.6 L701.0 315.9 L707.9 317.1"/><path d="M697.5 318.5 L701.0 315.9"/><path d="M697.8 320.2 L701.4 319.9 L707.2 319.0 L705.1 325.1 L701.0 325.9 L696.9 324.3 L696.0 323.2"/><path d="M707.9 317.1 L710.7 313.0 L709.8 308.6 L709.8 302.7 L708.5 301.1 L702.7 301.1"/><path d="M707.2 319.0 L712.4 321.0 L715.5 319.3 L718.5 326.9 L721.3 327.7"/><path d="M715.5 319.3 L720.0 320.4 L721.9 324.3"/><path d="M708.3 330.4 L712.5 331.7 L717.2 330.9 L719.3 331.7"/><path d="M705.1 325.1 L708.3 330.4"/><path d="M708.3 330.4 L707.9 335.2 L708.6 337.7 L714.6 336.7 L718.1 336.0"/><path d="M703.2 341.9 L704.7 338.7 L708.6 337.7"/><path d="M714.6 336.7 L715.3 339.0"/><path d="M696.9 324.3 L694.9 327.5 L701.8 328.5 L702.5 332.9 L700.4 334.7"/><path d="M701.8 328.5 L705.1 325.1"/><path d="M702.5 332.9 L703.8 334.0 L704.4 336.2 L707.9 335.2"/><path d="M725.2 308.3 L723.5 297.2 L718.5 295.2"/><path d="M709.9 310.1 L716.3 309.5 L722.8 310.7 L725.2 308.3 L730.1 311.0 L733.4 313.3 L740.5 315.6 L739.9 320.7 L737.1 322.6"/><path d="M705.1 295.5 L715.5 296.9 L718.5 295.2"/><path d="M706.6 290.4 L711.2 289.4 L717.0 290.8 L718.5 295.2"/><path d="M717.0 290.8 L717.6 284.0"/><path d="M717.8 279.9 L720.9 276.1 L724.7 270.5 L721.7 249.0"/><path d="M687.2 285.1 L689.3 278.0 L688.7 268.0 L693.0 259.4 L699.5 245.0"/><path d="M710.9 258.0 L709.9 251.0"/><path d="M743.5 337.2 L747.0 338.2 L749.4 341.6 L748.5 347.6"/><path d="M733.4 349.0 L736.8 348.5 L744.9 347.8 L748.5 347.6"/><path d="M740.5 332.4 L747.0 334.7 L752.6 336.5 L756.3 336.5"/><path d="M747.0 338.2 L752.6 338.0"/><path d="M749.4 341.6 L752.6 343.6 L755.4 344.8"/><path d="M744.9 347.8 L742.7 353.8 L738.2 356.3"/><path d="M738.2 356.3 L739.0 358.9 L734.9 360.4 L734.9 362.8 L731.2 364.8"/><path d="M732.7 357.8 L738.2 356.3"/><path d="M731.4 356.9 L732.3 355.1 L734.1 354.5"/><path d="M731.0 364.8 L732.1 360.4 L732.7 357.8"/><path d="M748.5 347.6 L750.7 352.2 L751.8 357.1 L755.0 360.7 L756.3 363.7"/><path d="M738.6 359.4 L749.2 365.4 L752.6 365.6 L755.4 364.8"/><path d="M745.7 391.3 L752.6 389.6 L757.2 387.0 L762.8 386.3 L769.7 384.3 L768.8 378.9 L762.8 378.3 L761.9 375.6"/><path d="M762.8 386.3 L764.9 390.9"/><path d="M770.8 374.6 L769.9 376.2 L768.8 378.9"/><path d="M779.6 349.0 L779.2 354.0 L779.6 360.7 L781.4 364.8 L780.9 373.8"/><path d="M766.5 347.1 L772.1 345.7 L779.6 349.0"/><path d="M781.4 364.8 L789.8 363.9 L795.0 359.6 L797.8 355.1 L799.1 349.2 L804.7 348.0"/><path d="M779.6 349.0 L786.1 347.8 L792.1 347.6 L799.1 348.3 L804.7 347.6"/><path d="M793.2 376.9 L796.9 375.6 L797.8 368.6 L803.8 363.7 L804.9 358.3 L807.1 353.8 L810.9 351.5"/><path d="M810.9 351.5 L813.1 358.3 L815.5 363.3 L815.1 366.0 L822.4 369.2 L830.2 370.7 L830.0 368.0"/><path d="M815.5 363.3 L818.7 363.5 L826.1 368.0 L830.0 368.2"/><path d="M831.3 369.4 L837.3 368.4 L843.8 365.8 L847.2 367.5"/><path d="M830.0 371.5 L831.7 374.2 L831.2 380.3"/><path d="M837.9 382.3 L837.3 375.2 L838.2 374.2 L833.2 371.5"/><path d="M847.2 367.5 L842.9 372.1 L841.6 376.2 L839.2 379.3 L837.9 382.3"/><path d="M847.2 367.5 L849.4 374.2 L849.0 376.0 L851.3 380.1 L854.4 381.5 L856.1 379.5 L862.1 377.7 L867.1 381.3"/><path d="M852.4 383.5 L848.8 384.9 L847.5 387.2 L850.2 391.7 L849.6 398.8 L849.4 403.6"/><path d="M852.4 383.5 L854.4 385.3 L854.6 388.6 L857.0 388.4 L861.0 391.3 L862.6 393.7"/><path d="M856.1 379.5 L859.6 384.3 L862.4 387.4 L866.4 393.7"/><path d="M856.9 399.4 L857.8 395.4 L862.6 395.4 L866.4 396.9 L863.7 402.1 L860.4 402.8"/><path d="M852.4 410.2 L855.4 411.5 L856.1 410.7"/><path d="M829.5 316.8 L835.4 326.9 L844.8 334.2 L861.5 337.0 L873.6 332.2 L882.0 328.3 L889.3 323.7 L884.4 321.3 L882.6 315.1"/><path d="M882.6 315.1 L889.4 306.7 L900.6 306.1 L910.5 321.0 L917.0 319.3 L909.9 329.6 L909.4 334.7"/><path d="M829.5 316.8 L837.3 312.4 L848.5 308.6 L859.6 313.9 L867.1 316.5 L878.8 313.6 L882.6 315.1"/><path d="M829.5 316.8 L825.2 322.9 L819.6 327.5 L815.3 328.5 L815.5 334.7 L805.6 339.7 L802.9 342.1 L805.3 347.3 L807.1 348.7 L810.9 351.5"/><path d="M829.5 316.8 L822.4 312.1 L815.9 310.4 L808.4 302.4 L798.2 299.2 L792.6 299.8 L779.8 302.4 L779.6 309.2 L769.7 312.7 L761.5 311.5 L755.4 314.5 L752.6 318.8 L755.4 323.7 L757.8 324.8"/><path d="M764.7 337.7 L770.3 337.7 L770.3 328.3 L774.9 326.9 L779.6 329.8 L786.1 331.9 L788.9 333.7 L793.5 339.4 L798.2 335.2 L802.9 334.7 L815.3 333.7"/><path d="M770.3 337.7 L773.1 337.7 L777.9 336.5 L782.4 341.2 L789.8 347.1"/><path d="M797.3 338.5 L802.9 342.1"/><path d="M793.5 339.4 L796.3 341.4 L802.9 342.1"/><path d="M897.6 340.9 L901.9 336.5 L907.5 335.0"/><path d="M900.8 346.4 L905.3 344.3"/><path d="M662.6 352.4 L663.8 359.1 L659.1 362.0 L649.8 366.0 L649.8 369.4"/><path d="M649.8 368.6 L641.4 368.6"/><path d="M649.8 369.4 L649.8 372.3 L643.7 372.1 L643.7 377.3 L641.8 381.7 L634.3 381.7"/><path d="M649.8 369.4 L657.1 374.2 L668.2 382.3 L672.0 386.1 L674.0 385.9 L676.8 385.5 L688.2 377.3 L683.7 371.1 L684.4 362.4 L681.6 356.7 L681.8 348.3"/><path d="M683.7 363.3 L684.6 373.2 L688.2 377.3"/><path d="M657.1 374.2 L653.9 391.3 L643.7 394.4 L635.3 391.7"/><path d="M674.0 385.9 L672.7 393.1 L667.7 394.2 L665.1 393.9 L660.8 394.8 L655.9 403.0"/><path d="M667.7 394.2 L670.5 400.0 L672.7 400.4"/><path d="M688.2 377.3 L693.9 378.3 L695.8 383.5 L694.9 392.1 L691.3 396.0"/><path d="M693.9 378.3 L710.7 385.3"/><path d="M712.5 360.2 L712.5 380.3 L734.7 380.3"/><path d="M710.7 385.3 L710.7 384.3 L712.5 380.3"/><path d="M710.7 385.3 L707.9 393.1 L709.8 404.5"/><path d="M709.8 404.5 L716.3 404.3 L724.7 404.2 L729.3 404.5"/><path d="M737.7 388.2 L734.0 395.4 L729.3 404.5"/><path d="M734.0 395.4 L740.5 395.0 L745.9 398.3"/><path d="M691.3 396.0 L693.0 397.9 L693.9 403.6 L690.2 409.2 L682.8 413.2"/><path d="M672.7 400.4 L680.9 397.9 L691.3 396.5"/><path d="M671.0 410.4 L672.7 400.4"/><path d="M691.3 408.1 L700.4 407.4 L707.9 402.1"/><path d="M695.8 418.2 L700.6 414.3 L710.7 412.8 L717.0 412.8"/><path d="M693.0 418.2 L695.8 418.2"/><path d="M684.2 418.0 L687.0 418.0 L693.0 418.2"/><path d="M687.0 420.4 L683.5 420.3"/><path d="M688.3 431.6 L693.9 430.1 L698.6 424.2 L700.6 414.3"/><path d="M688.7 433.5 L695.8 436.5 L699.5 437.2 L706.6 435.9 L707.0 442.9 L710.7 442.9"/><path d="M710.7 442.9 L712.5 443.3 L716.3 444.8 L720.9 445.8 L719.3 438.2"/><path d="M717.0 412.8 L723.3 415.8 L721.1 424.9 L720.0 430.7 L722.8 437.6"/><path d="M723.3 415.8 L729.3 414.5 L729.3 420.4 L729.1 424.2 L721.1 424.9"/><path d="M729.1 424.2 L739.0 431.1"/><path d="M729.3 404.5 L731.2 413.0 L744.0 414.8 L747.9 413.2 L755.0 407.4 L747.9 405.3 L745.7 401.9"/><path d="M744.0 414.8 L742.3 425.3"/><path d="M729.3 414.5 L731.2 413.0"/><path d="M717.0 412.8 L729.3 414.5"/><path d="M741.4 442.0 L735.8 444.0 L730.4 443.9 L727.4 440.1 L722.8 437.6"/><path d="M722.2 451.7 L727.4 455.4 L726.5 464.3 L724.3 465.1"/><path d="M730.4 443.9 L732.1 448.6 L730.2 451.5 L727.4 448.6 L722.2 451.7"/><path d="M712.9 456.0 L722.2 451.7"/><path d="M707.0 446.7 L707.0 453.3 L709.4 455.4 L712.9 456.0"/><path d="M688.0 455.0 L704.7 456.2 L709.4 455.4"/><path d="M703.2 464.3 L703.2 470.0 L703.2 477.5 L696.7 477.9"/><path d="M703.2 470.0 L707.9 472.5 L713.5 471.4 L716.3 467.7 L720.7 464.7"/><path d="M712.9 456.0 L714.4 457.4 L717.8 461.5 L720.7 464.7"/><path d="M720.7 464.7 L724.3 465.1 L725.6 474.1"/><path d="M655.9 403.0 L660.8 401.7 L666.9 401.7 L670.5 400.0"/><path d="M660.8 401.7 L660.6 413.0"/><path d="M666.9 401.7 L668.2 410.9"/><path d="M669.0 400.9 L669.5 410.5"/><path d="M655.9 403.0 L651.1 403.0 L650.5 408.3 L652.0 414.1"/><path d="M651.1 403.0 L644.6 399.0 L643.7 394.4"/><path d="M650.5 408.3 L647.4 406.4 L644.6 409.2"/><path d="M644.6 399.0 L640.5 398.6 L634.9 399.0"/><path d="M647.4 406.4 L642.7 403.6 L638.1 402.1"/></g>
  <g fill="#72d6f7" stroke="rgba(114,214,247,0.45)" stroke-width="1"><circle cx="485.2" cy="346.6" r="15.4"/><circle cx="488.4" cy="283.3" r="4.2"/><circle cx="475.3" cy="377.9" r="3.2"/><circle cx="497.9" cy="393.1" r="2.8"/><circle cx="500.8" cy="389.8" r="2.6"/><circle cx="504.8" cy="394.4" r="2.6"/><circle cx="500.5" cy="396.5" r="2.6"/><circle cx="507.7" cy="398.1" r="2.6"/><circle cx="509.6" cy="403.8" r="2.9"/><circle cx="516.9" cy="406.4" r="2.8"/><circle cx="516.7" cy="382.3" r="2.6"/><circle cx="522.1" cy="388.0" r="2.6"/><circle cx="530.6" cy="386.3" r="2.6"/><circle cx="534.7" cy="386.5" r="3"/><circle cx="542.2" cy="387.8" r="2.6"/><circle cx="523.9" cy="375.8" r="2.6"/><circle cx="551.9" cy="402.8" r="2.6"/><circle cx="555.2" cy="397.5" r="2.6"/><circle cx="550.9" cy="390.0" r="2.6"/><circle cx="549.3" cy="389.6" r="2.6"/><circle cx="551.7" cy="393.3" r="2.6"/><circle cx="552.4" cy="396.2" r="2.6"/><circle cx="552.0" cy="397.5" r="2.6"/><circle cx="551.1" cy="399.6" r="2.6"/><circle cx="535.7" cy="398.8" r="2.6"/><circle cx="537.5" cy="399.4" r="2.6"/><circle cx="551.5" cy="391.7" r="2.6"/><circle cx="552.4" cy="394.8" r="2.6"/><circle cx="545.7" cy="387.4" r="2.6"/><circle cx="548.7" cy="387.8" r="2.6"/><circle cx="550.2" cy="390.8" r="2.6"/><circle cx="530.1" cy="414.8" r="3.2"/><circle cx="543.1" cy="409.2" r="2.8"/><circle cx="556.1" cy="413.0" r="2.6"/><circle cx="561.7" cy="414.8" r="2.6"/><circle cx="567.3" cy="414.8" r="2.6"/><circle cx="563.6" cy="441.0" r="2.9"/><circle cx="519.8" cy="425.1" r="2.8"/><circle cx="526.4" cy="440.1" r="3"/><circle cx="545.9" cy="453.5" r="2.6"/><circle cx="558.0" cy="466.9" r="2.6"/><circle cx="533.8" cy="482.2" r="3"/><circle cx="546.8" cy="489.7" r="3.2"/><circle cx="561.7" cy="487.0" r="2.6"/><circle cx="662.3" cy="303.9" r="5.5"/><circle cx="651.1" cy="304.9" r="3"/><circle cx="630.6" cy="261.6" r="2.6"/><circle cx="682.8" cy="276.1" r="2.9"/><circle cx="693.6" cy="274.9" r="3.1"/><circle cx="714.4" cy="265.9" r="2.7"/><circle cx="683.7" cy="295.9" r="2.8"/><circle cx="713.5" cy="286.5" r="2.6"/><circle cx="712.5" cy="292.8" r="2.6"/><circle cx="710.7" cy="298.2" r="2.6"/><circle cx="702.3" cy="308.6" r="2.8"/><circle cx="682.0" cy="310.7" r="7.2"/><circle cx="676.2" cy="308.0" r="3.2"/><circle cx="674.6" cy="312.7" r="3.1"/><circle cx="677.4" cy="315.1" r="2.6"/><circle cx="669.4" cy="326.4" r="5.1"/><circle cx="681.3" cy="323.5" r="3.2"/><circle cx="693.0" cy="321.3" r="3"/><circle cx="694.7" cy="315.1" r="2.7"/><circle cx="702.3" cy="318.2" r="2.6"/><circle cx="702.1" cy="322.4" r="2.6"/><circle cx="693.6" cy="325.3" r="2.6"/><circle cx="695.8" cy="327.7" r="2.6"/><circle cx="699.1" cy="330.4" r="2.6"/><circle cx="704.7" cy="330.9" r="2.7"/><circle cx="701.9" cy="334.0" r="2.6"/><circle cx="703.2" cy="338.0" r="2.6"/><circle cx="706.4" cy="337.0" r="2.6"/><circle cx="707.0" cy="342.6" r="2.8"/><circle cx="713.1" cy="334.2" r="2.6"/><circle cx="712.5" cy="325.9" r="2.7"/><circle cx="719.1" cy="322.4" r="2.6"/><circle cx="724.7" cy="317.3" r="3.6"/><circle cx="718.1" cy="303.9" r="2.8"/><circle cx="852.2" cy="281.8" r="4.4"/><circle cx="689.3" cy="334.0" r="4.3"/><circle cx="658.6" cy="340.9" r="4.8"/><circle cx="651.1" cy="341.9" r="2.8"/><circle cx="692.8" cy="350.6" r="2.6"/><circle cx="679.8" cy="331.7" r="2.6"/><circle cx="668.8" cy="334.7" r="2.6"/><circle cx="683.8" cy="322.5" r="2.6"/><circle cx="689.2" cy="331.0" r="2.6"/><circle cx="727.4" cy="352.7" r="2.6"/><circle cx="731.2" cy="343.3" r="3.6"/><circle cx="737.7" cy="352.7" r="2.7"/><circle cx="732.8" cy="355.1" r="2.8"/><circle cx="731.0" cy="360.7" r="3"/><circle cx="731.5" cy="359.6" r="2.6"/><circle cx="734.0" cy="361.1" r="3.3"/><circle cx="747.4" cy="357.1" r="2.7"/><circle cx="764.5" cy="361.1" r="3.2"/><circle cx="749.8" cy="376.2" r="6.2"/><circle cx="754.4" cy="365.2" r="3.2"/><circle cx="760.0" cy="372.1" r="2.8"/><circle cx="761.3" cy="373.6" r="3"/><circle cx="766.5" cy="376.2" r="4.4"/><circle cx="770.3" cy="382.3" r="3"/><circle cx="754.4" cy="393.1" r="2.6"/><circle cx="747.0" cy="335.5" r="2.6"/><circle cx="749.8" cy="340.4" r="2.6"/><circle cx="754.8" cy="340.2" r="2.6"/><circle cx="790.8" cy="320.2" r="3.4"/><circle cx="784.2" cy="337.2" r="2.8"/><circle cx="775.9" cy="343.3" r="2.6"/><circle cx="804.7" cy="337.2" r="2.6"/><circle cx="798.2" cy="343.8" r="2.6"/><circle cx="786.7" cy="358.0" r="2.6"/><circle cx="796.3" cy="363.7" r="3.3"/><circle cx="809.0" cy="385.1" r="3.6"/><circle cx="822.4" cy="367.3" r="2.6"/><circle cx="834.3" cy="369.2" r="2.6"/><circle cx="833.6" cy="376.7" r="3"/><circle cx="816.3" cy="407.7" r="2.6"/><circle cx="802.3" cy="416.3" r="2.6"/><circle cx="859.6" cy="352.7" r="3"/><circle cx="857.8" cy="323.5" r="2.6"/><circle cx="902.5" cy="340.2" r="2.6"/><circle cx="904.0" cy="349.4" r="3"/><circle cx="923.9" cy="349.2" r="3.2"/><circle cx="848.5" cy="380.3" r="2.6"/><circle cx="854.1" cy="394.0" r="3.6"/><circle cx="856.9" cy="385.3" r="2.6"/><circle cx="861.5" cy="398.5" r="2.6"/><circle cx="863.4" cy="392.1" r="2.6"/><circle cx="875.7" cy="417.8" r="3.3"/><circle cx="859.3" cy="419.8" r="3.1"/><circle cx="879.6" cy="413.9" r="2.6"/><circle cx="889.4" cy="426.8" r="2.7"/><circle cx="893.2" cy="399.8" r="2.6"/><circle cx="900.1" cy="438.8" r="2.6"/><circle cx="939.7" cy="434.8" r="2.6"/><circle cx="913.5" cy="475.2" r="4.4"/><circle cx="986.3" cy="506.1" r="3"/><circle cx="963.9" cy="440.3" r="2.6"/><circle cx="977.0" cy="451.1" r="2.6"/><circle cx="974.2" cy="462.9" r="2.6"/><circle cx="916.4" cy="408.3" r="2.6"/><circle cx="960.2" cy="409.4" r="2.6"/><circle cx="976.8" cy="423.2" r="2.6"/><circle cx="654.8" cy="359.4" r="2.7"/><circle cx="670.8" cy="368.0" r="2.7"/><circle cx="683.7" cy="354.9" r="2.6"/><circle cx="698.0" cy="374.6" r="2.8"/><circle cx="721.9" cy="371.1" r="2.7"/><circle cx="721.9" cy="393.1" r="2.9"/><circle cx="722.8" cy="408.7" r="2.7"/><circle cx="700.8" cy="396.0" r="2.7"/><circle cx="680.5" cy="392.5" r="2.6"/><circle cx="659.5" cy="393.1" r="2.6"/><circle cx="644.0" cy="385.5" r="2.6"/><circle cx="642.0" cy="375.2" r="2.6"/><circle cx="639.0" cy="395.2" r="2.6"/><circle cx="637.3" cy="397.1" r="2.6"/><circle cx="638.1" cy="399.8" r="2.6"/><circle cx="645.5" cy="402.8" r="2.6"/><circle cx="644.0" cy="406.4" r="2.6"/><circle cx="648.5" cy="410.2" r="2.6"/><circle cx="655.8" cy="408.1" r="3.2"/><circle cx="664.1" cy="407.5" r="2.7"/><circle cx="667.9" cy="406.4" r="2.6"/><circle cx="670.3" cy="404.3" r="2.6"/><circle cx="662.8" cy="399.2" r="2.7"/><circle cx="680.9" cy="404.3" r="2.8"/><circle cx="689.6" cy="411.7" r="2.7"/><circle cx="705.1" cy="410.0" r="2.6"/><circle cx="685.2" cy="419.3" r="2.6"/><circle cx="687.8" cy="423.4" r="2.6"/><circle cx="693.9" cy="423.8" r="2.6"/><circle cx="711.8" cy="423.8" r="2.8"/><circle cx="726.3" cy="419.9" r="2.9"/><circle cx="736.6" cy="421.4" r="2.8"/><circle cx="739.7" cy="406.2" r="2.8"/><circle cx="738.2" cy="393.3" r="2.6"/><circle cx="745.3" cy="400.2" r="2.6"/><circle cx="751.7" cy="412.0" r="2.6"/><circle cx="721.7" cy="426.0" r="2.6"/><circle cx="721.7" cy="428.6" r="2.6"/><circle cx="730.8" cy="434.1" r="2.7"/><circle cx="720.0" cy="451.5" r="2.6"/><circle cx="729.9" cy="447.1" r="2.6"/><circle cx="731.2" cy="458.3" r="2.6"/><circle cx="721.5" cy="461.3" r="2.6"/><circle cx="698.6" cy="445.4" r="2.7"/><circle cx="698.0" cy="464.5" r="2.6"/><circle cx="710.7" cy="464.7" r="2.6"/><circle cx="712.5" cy="478.8" r="3.3"/><circle cx="718.5" cy="480.0" r="2.6"/><circle cx="724.7" cy="473.5" r="2.6"/><circle cx="753.0" cy="459.1" r="2.6"/><circle cx="746.6" cy="444.2" r="2.6"/><circle cx="773.3" cy="460.9" r="2.6"/><circle cx="769.3" cy="431.1" r="2.6"/><circle cx="621.3" cy="392.1" r="2.6"/><circle cx="678.3" cy="421.7" r="2.6"/></g>
 </g>
</svg>

<!-- legend -->
<div class="a" style="left:365.8px;top:509.8px;width:233px;height:45.5px;background:rgba(255,255,255,0.72)"></div>
<svg class="a" style="left:356px;top:500px" width="250" height="60" viewBox="356 500 250 60"><g fill="#72d6f7"><circle cx="381.7" cy="527" r="2.5"/><circle cx="414.6" cy="527" r="6"/><circle cx="452.5" cy="527" r="9"/><circle cx="491" cy="527" r="12.3"/><circle cx="533" cy="527" r="15.6"/></g><rect x="563.7" y="513.4" width="25.3" height="25.2" fill="#c7cdce"/></svg>
<div class="a lg" style="left:556px;width:40px">No data</div>
<div class="a lg" style="left:361.7px;width:40px">246</div><div class="a lg" style="left:394.6px;width:40px">13.1 mil</div><div class="a lg" style="left:432.5px;width:40px">26.2 mil</div><div class="a lg" style="left:471px;width:40px">39.3 mil</div><div class="a lg" style="left:513px;width:40px">52.4 mil</div>
<div class="a" style="left:365.8px;top:561.8px;width:233px;height:15.2px;background:rgba(255,255,255,0.72)"></div>
<div class="a" style="left:369px;top:565px;font-size:7px;line-height:8px;color:#3c4247">Disclaimer: This map is for illustration purposes only.. <span style="color:#4f7a94">Read more</span></div>

<!-- zoom -->
<div class="a" style="left:950px;top:541px;width:19.2px;height:39px;border-radius:2px;background:#1a3e5c"></div>
<div class="a" style="left:950px;top:560px;width:19.2px;height:1px;background:#5d7a90"></div>
<svg class="a" style="left:950px;top:541px" width="20" height="39"><path d="M9.6 5.5 V13.5 M5.6 9.5 H13.6 M6 29.5 H13.2" stroke="#fff" stroke-width="1.8"/></svg>

<!-- bottom bar -->
<div class="a" style="left:369px;top:593px;font-size:7.8px;line-height:8px;color:#5f6870">Source: UN DESA, 2025</div>
<div class="a" style="left:0;top:596px;width:1200px;height:5px;background:linear-gradient(to bottom,#4d86a3 0,#4d86a3 1px,#276f98 1px)"></div>

<div class="a" style="left:241.90px;top:16.66px;font-size:16px;line-height:16px;font-weight:400;color:#2b5e7e;letter-spacing:-0.086px;-webkit-text-stroke:0.15px;">MIGRATION DATA PORTAL</div>
<div class="a" style="left:241.68px;top:32.80px;font-size:12.4px;line-height:12.4px;font-weight:400;color:#4a7592;letter-spacing:0.080px;-webkit-text-stroke:0.15px;">The bigger picture</div>
<div class="a" style="left:678.75px;top:17.58px;font-size:9px;line-height:9px;font-weight:400;color:#4e7590;letter-spacing:0.035px;">Mailing list</div>
<div class="a" style="left:742.05px;top:17.58px;font-size:9px;line-height:9px;font-weight:400;color:#6d7479;letter-spacing:0.067px;">About</div>
<div class="a" style="left:781.55px;top:17.58px;font-size:9px;line-height:9px;font-weight:400;color:#6d7479;letter-spacing:-0.558px;">FAQ</div>
<div class="a" style="left:813.55px;top:17.58px;font-size:9px;line-height:9px;font-weight:400;color:#6d7479;letter-spacing:-0.090px;">Feedback</div>
<div class="a" style="left:877.55px;top:17.58px;font-size:9px;line-height:9px;font-weight:400;color:#2f3337;letter-spacing:-0.105px;">English</div>
<div class="a" style="left:918.55px;top:17.58px;font-size:9px;line-height:9px;font-weight:400;color:#6d7479;letter-spacing:0.061px;">Español</div>
<div class="a" style="left:963.55px;top:17.58px;font-size:9px;line-height:9px;font-weight:400;color:#6d7479;letter-spacing:-0.231px;">Français</div>
<div class="a" style="left:197.56px;top:65.86px;font-size:12.8px;line-height:12.8px;font-weight:400;color:#2f6080;letter-spacing:0.041px;-webkit-text-stroke:0.6px;">DATA &amp; STATISTICS</div>
<div class="a" style="left:197.82px;top:81.57px;font-size:7.6px;line-height:7.6px;font-weight:400;color:#3f6b89;letter-spacing:0.314px;-webkit-text-stroke:0.3px;">Dashboards, maps &amp; interactive tools</div>
<div class="a" style="left:355.16px;top:65.86px;font-size:12.8px;line-height:12.8px;font-weight:400;color:#2f6080;letter-spacing:-0.500px;-webkit-text-stroke:0.6px;">OVERVIEWS</div>
<div class="a" style="left:355.42px;top:81.57px;font-size:7.6px;line-height:7.6px;font-weight:400;color:#3f6b89;letter-spacing:0.327px;-webkit-text-stroke:0.3px;">By theme and region</div>
<div class="a" style="left:451.36px;top:65.86px;font-size:12.8px;line-height:12.8px;font-weight:400;color:#2f6080;letter-spacing:-0.155px;-webkit-text-stroke:0.6px;">POLICY &amp; GOVERNANCE</div>
<div class="a" style="left:451.62px;top:81.57px;font-size:7.6px;line-height:7.6px;font-weight:400;color:#3f6b89;letter-spacing:-0.076px;-webkit-text-stroke:0.3px;">SDGs, GCM &amp; MGI</div>
<div class="a" style="left:622.06px;top:65.86px;font-size:12.8px;line-height:12.8px;font-weight:400;color:#2f6080;letter-spacing:-0.873px;-webkit-text-stroke:0.6px;">RESOURCES</div>
<div class="a" style="left:622.32px;top:81.57px;font-size:7.6px;line-height:7.6px;font-weight:400;color:#3f6b89;letter-spacing:0.409px;-webkit-text-stroke:0.3px;">Tools and expert contributions</div>
<div class="a" style="left:822.52px;top:72.37px;font-size:9.6px;line-height:9.6px;font-weight:400;color:#6e767e;letter-spacing:0.027px;-webkit-text-stroke:0.15px;">Search the portal here ....</div>
<div class="a" style="left:227.41px;top:164.80px;font-size:9.8px;line-height:9.8px;font-weight:400;color:#e5a272;letter-spacing:0.351px;-webkit-text-stroke:0.25px;">International data</div>
<div class="a" style="left:227.41px;top:193.30px;font-size:9.8px;line-height:9.8px;font-weight:400;color:#437b8f;letter-spacing:0.178px;-webkit-text-stroke:0.25px;">Compare by</div>
<div class="a" style="left:227.41px;top:205.30px;font-size:9.8px;line-height:9.8px;font-weight:400;color:#437b8f;letter-spacing:0.136px;-webkit-text-stroke:0.25px;">geographic scope</div>
<div class="a" style="left:227.11px;top:231.70px;font-size:9.8px;line-height:9.8px;font-weight:400;color:#437b8f;letter-spacing:0.281px;-webkit-text-stroke:0.25px;">Compare</div>
<div class="a" style="left:227.11px;top:243.70px;font-size:9.8px;line-height:9.8px;font-weight:400;color:#437b8f;letter-spacing:0.416px;-webkit-text-stroke:0.25px;">indicators</div>
<div class="a" style="left:227.11px;top:285.50px;font-size:9.8px;line-height:9.8px;font-weight:400;color:#437b8f;letter-spacing:0.304px;-webkit-text-stroke:0.25px;">National data</div>
<div class="a" style="left:229.65px;top:339.77px;font-size:7px;line-height:7px;font-weight:400;color:#7a8590;letter-spacing:0.677px;-webkit-text-stroke:0.2px;">How to use the</div>
<div class="a" style="left:229.65px;top:349.47px;font-size:7px;line-height:7px;font-weight:400;color:#7a8590;letter-spacing:0.000px;-webkit-text-stroke:0.2px;">dashboard</div>
<div class="a" style="left:361.25px;top:126.79px;font-size:11px;line-height:11px;font-weight:700;color:#2c4052;letter-spacing:-0.094px;">Indicator</div>
<div class="a" style="left:361.42px;top:140.57px;font-size:7.6px;line-height:7.6px;font-weight:400;color:#e58b48;letter-spacing:0.211px;-webkit-text-stroke:0.3px;">International migrant stock (Total)</div>
<div class="a" style="left:546.35px;top:127.29px;font-size:11px;line-height:11px;font-weight:700;color:#2c4052;letter-spacing:-0.407px;">Geographic Scope</div>
<div class="a" style="left:546.52px;top:140.57px;font-size:7.6px;line-height:7.6px;font-weight:400;color:#6b7680;letter-spacing:0.076px;-webkit-text-stroke:0.3px;">Select a geographic scope area from the list</div>
<div class="a" style="left:811.05px;top:126.89px;font-size:11px;line-height:11px;font-weight:700;color:#2c4052;letter-spacing:0.000px;">Year</div>
<div class="a" style="left:811.22px;top:140.57px;font-size:7.6px;line-height:7.6px;font-weight:400;color:#e58b48;letter-spacing:-0.049px;">2024</div>
<div class="a" style="left:834.22px;top:140.57px;font-size:7.6px;line-height:7.6px;font-weight:400;color:#9aa2a8;letter-spacing:0.048px;text-decoration:underline;text-decoration-color:#c5cacd;">change</div>
<div class="a" style="left:378.30px;top:164.83px;font-size:8px;line-height:8px;font-weight:700;color:#2c4052;letter-spacing:-0.383px;">PROFILE: WORLD</div>
<div class="a" style="left:935.81px;top:164.00px;font-size:7.8px;line-height:7.8px;font-weight:400;color:#5b7f8e;letter-spacing:-0.195px;">Reset all</div>
<div class="a" style="left:354.47px;top:207.15px;font-size:12.7px;line-height:12.7px;font-weight:700;color:#1f3a52;letter-spacing:-0.018px;">Total number of international migrants at mid-year 2024</div>
<div class="a" style="left:690.98px;top:208.18px;font-size:6.4px;line-height:6.4px;font-weight:700;color:#467790;letter-spacing:0.472px;">(What is this?)</div>
<div class="a" style="left:354.71px;top:226.90px;font-size:7.8px;line-height:7.8px;font-weight:400;color:#5f6870;letter-spacing:-0.080px;-webkit-text-stroke:0.2px;">Source: UN DESA, 2025</div>
<div class="a" style="left:441.45px;top:224.87px;font-size:7px;line-height:7px;font-weight:700;color:#467790;letter-spacing:0.620px;">(Citation)</div>
<div class="a" style="left:354.71px;top:237.00px;font-size:7.8px;line-height:7.8px;font-weight:400;color:#5f6870;letter-spacing:0.251px;-webkit-text-stroke:0.2px;">Data provider update: 2027</div>
</body></html>
